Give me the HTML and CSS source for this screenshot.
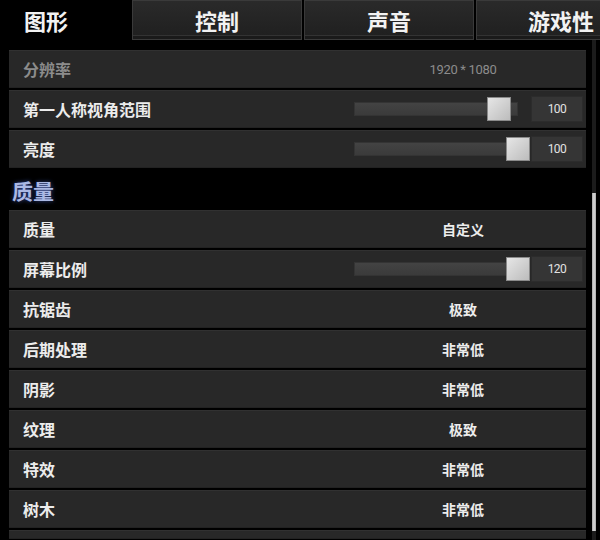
FILE: index.html
```html
<!DOCTYPE html>
<html lang="zh-CN">
<head>
    <meta charset="UTF-8">
    <meta name="viewport" content="width=device-width, initial-scale=1.0">
    <title>设置 - 图形</title>
    <link rel="stylesheet" href="styles.css">
</head>
<body>
    <div class="tabbar">
        <div class="tabs">
            <div class="tab active">图形</div>
            <div class="tab">控制</div>
            <div class="tab">声音</div>
            <div class="tab">游戏性</div>
        </div>
    </div>

    <div class="content">
        <div class="list">
            <div class="row disabled">
                <div class="label">分辨率</div>
                <div class="control"><span class="value num">1920 * 1080</span></div>
            </div>
            <div class="row">
                <div class="label">第一人称视角范围</div>
                <div class="control slider-control">
                    <div class="slider">
                        <div class="track"></div>
                        <div class="thumb" style="left: 133px"></div>
                    </div>
                    <div class="num-box">100</div>
                </div>
            </div>
            <div class="row">
                <div class="label">亮度</div>
                <div class="control slider-control">
                    <div class="slider">
                        <div class="track"></div>
                        <div class="thumb" style="left: 152px"></div>
                    </div>
                    <div class="num-box">100</div>
                </div>
            </div>

            <div class="section-title">质量</div>

            <div class="row">
                <div class="label">质量</div>
                <div class="control"><span class="value">自定义</span></div>
            </div>
            <div class="row">
                <div class="label">屏幕比例</div>
                <div class="control slider-control">
                    <div class="slider">
                        <div class="track"></div>
                        <div class="thumb" style="left: 152px"></div>
                    </div>
                    <div class="num-box">120</div>
                </div>
            </div>
            <div class="row">
                <div class="label">抗锯齿</div>
                <div class="control"><span class="value">极致</span></div>
            </div>
            <div class="row">
                <div class="label">后期处理</div>
                <div class="control"><span class="value">非常低</span></div>
            </div>
            <div class="row">
                <div class="label">阴影</div>
                <div class="control"><span class="value">非常低</span></div>
            </div>
            <div class="row">
                <div class="label">纹理</div>
                <div class="control"><span class="value">极致</span></div>
            </div>
            <div class="row">
                <div class="label">特效</div>
                <div class="control"><span class="value">非常低</span></div>
            </div>
            <div class="row">
                <div class="label">树木</div>
                <div class="control"><span class="value">非常低</span></div>
            </div>
            <!-- next row peeks in at the bottom edge -->
            <div class="row row-peek"></div>
        </div>

        <div class="scrollbar">
            <div class="scroll-thumb"></div>
        </div>
    </div>
</body>
</html>
```

FILE: styles.css
```css
body {
    margin: 0;
    background: #000;
    color: #eaeaea;
    font-family: "Noto Sans CJK SC", "Noto Sans", sans-serif;
    width: 600px;
    height: 540px;
    overflow: hidden;
}

/* top tabs */
.tabbar {
    width: 600px;
    overflow: hidden;
}

.tabs {
    display: flex;
    gap: 2px;
    height: 40px;
}

.tab {
    flex: 0 0 170px;
    box-sizing: border-box;
    display: flex;
    align-items: center;
    justify-content: center;
    font-size: 22px;
    font-weight: 700;
    color: #f2f2f2;
    background: linear-gradient(#2a2a2a, #1f1f1f);
    border: 1px solid #3a3a3a;
    box-shadow: inset 0 -3px 0 #1a1a1a, inset 0 -4px 0 #333;
}

.tab.active {
    flex-basis: 130px;
    padding-right: 38px;
    background: #000;
    border-color: #000;
    box-shadow: none;
}

/* list + scrollbar */
.content {
    display: flex;
}

.list {
    width: 577px;
    margin-left: 9px;
    padding-top: 10px;
}

.row {
    display: flex;
    align-items: center;
    height: 38px;
    margin-bottom: 2px;
    background: #282828;
    box-shadow: inset 0 1px 0 #313131, inset 0 -1px 0 #222;
}

.row-peek {
    height: 9px;
    margin-bottom: 0;
}

.label {
    flex: 1;
    padding-left: 14px;
    font-size: 16px;
    font-weight: 700;
    color: #ececec;
}

.control {
    width: 246px;
    height: 100%;
    display: flex;
    align-items: center;
    justify-content: center;
}

.value {
    font-size: 14px;
    font-weight: 700;
    color: #ececec;
}

.row.disabled .label,
.row.disabled .value {
    color: #8c8c8c;
}

.num {
    font-family: Roboto, "Liberation Sans", sans-serif;
    font-weight: 400;
    font-size: 13px;
    letter-spacing: -0.3px;
}

.slider-control {
    justify-content: flex-start;
    padding-left: 14px;
    box-sizing: border-box;
}

.slider {
    position: relative;
    width: 177px;
    height: 24px;
    display: flex;
    align-items: center;
}

.track {
    width: 164px;
    height: 14px;
    background: linear-gradient(#444, #3a3a3a);
    box-shadow: inset 0 0 0 1px #343434;
}

.thumb {
    position: absolute;
    top: 0;
    width: 24px;
    height: 24px;
    box-sizing: border-box;
    background: linear-gradient(135deg, #e6e6e6, #bcbcbc);
    border: 1px solid #8a8a8a;
}

.num-box {
    width: 52px;
    height: 26px;
    display: flex;
    align-items: center;
    justify-content: center;
    background: #353535;
    box-shadow: inset 0 0 0 1px #2c2c2c;
    font-family: Roboto, "Liberation Sans", sans-serif;
    font-size: 12px;
    letter-spacing: -0.5px;
    color: #e2e2e2;
}

.section-title {
    height: 38px;
    margin-bottom: 2px;
    display: flex;
    align-items: center;
    padding-left: 3px;
    padding-top: 2px;
    box-sizing: border-box;
    font-size: 21px;
    font-weight: 700;
    color: #aab8e4;
    text-shadow: 0 0 4px rgba(70, 100, 200, 0.7);
}

.scrollbar {
    width: 4px;
    margin-left: 6px;
    height: 500px;
    background: #1c1c1c;
}

.scroll-thumb {
    margin-top: 153px;
    height: 338px;
    background: linear-gradient(90deg, #a8a8a8, #dadada, #a8a8a8);
}
```
